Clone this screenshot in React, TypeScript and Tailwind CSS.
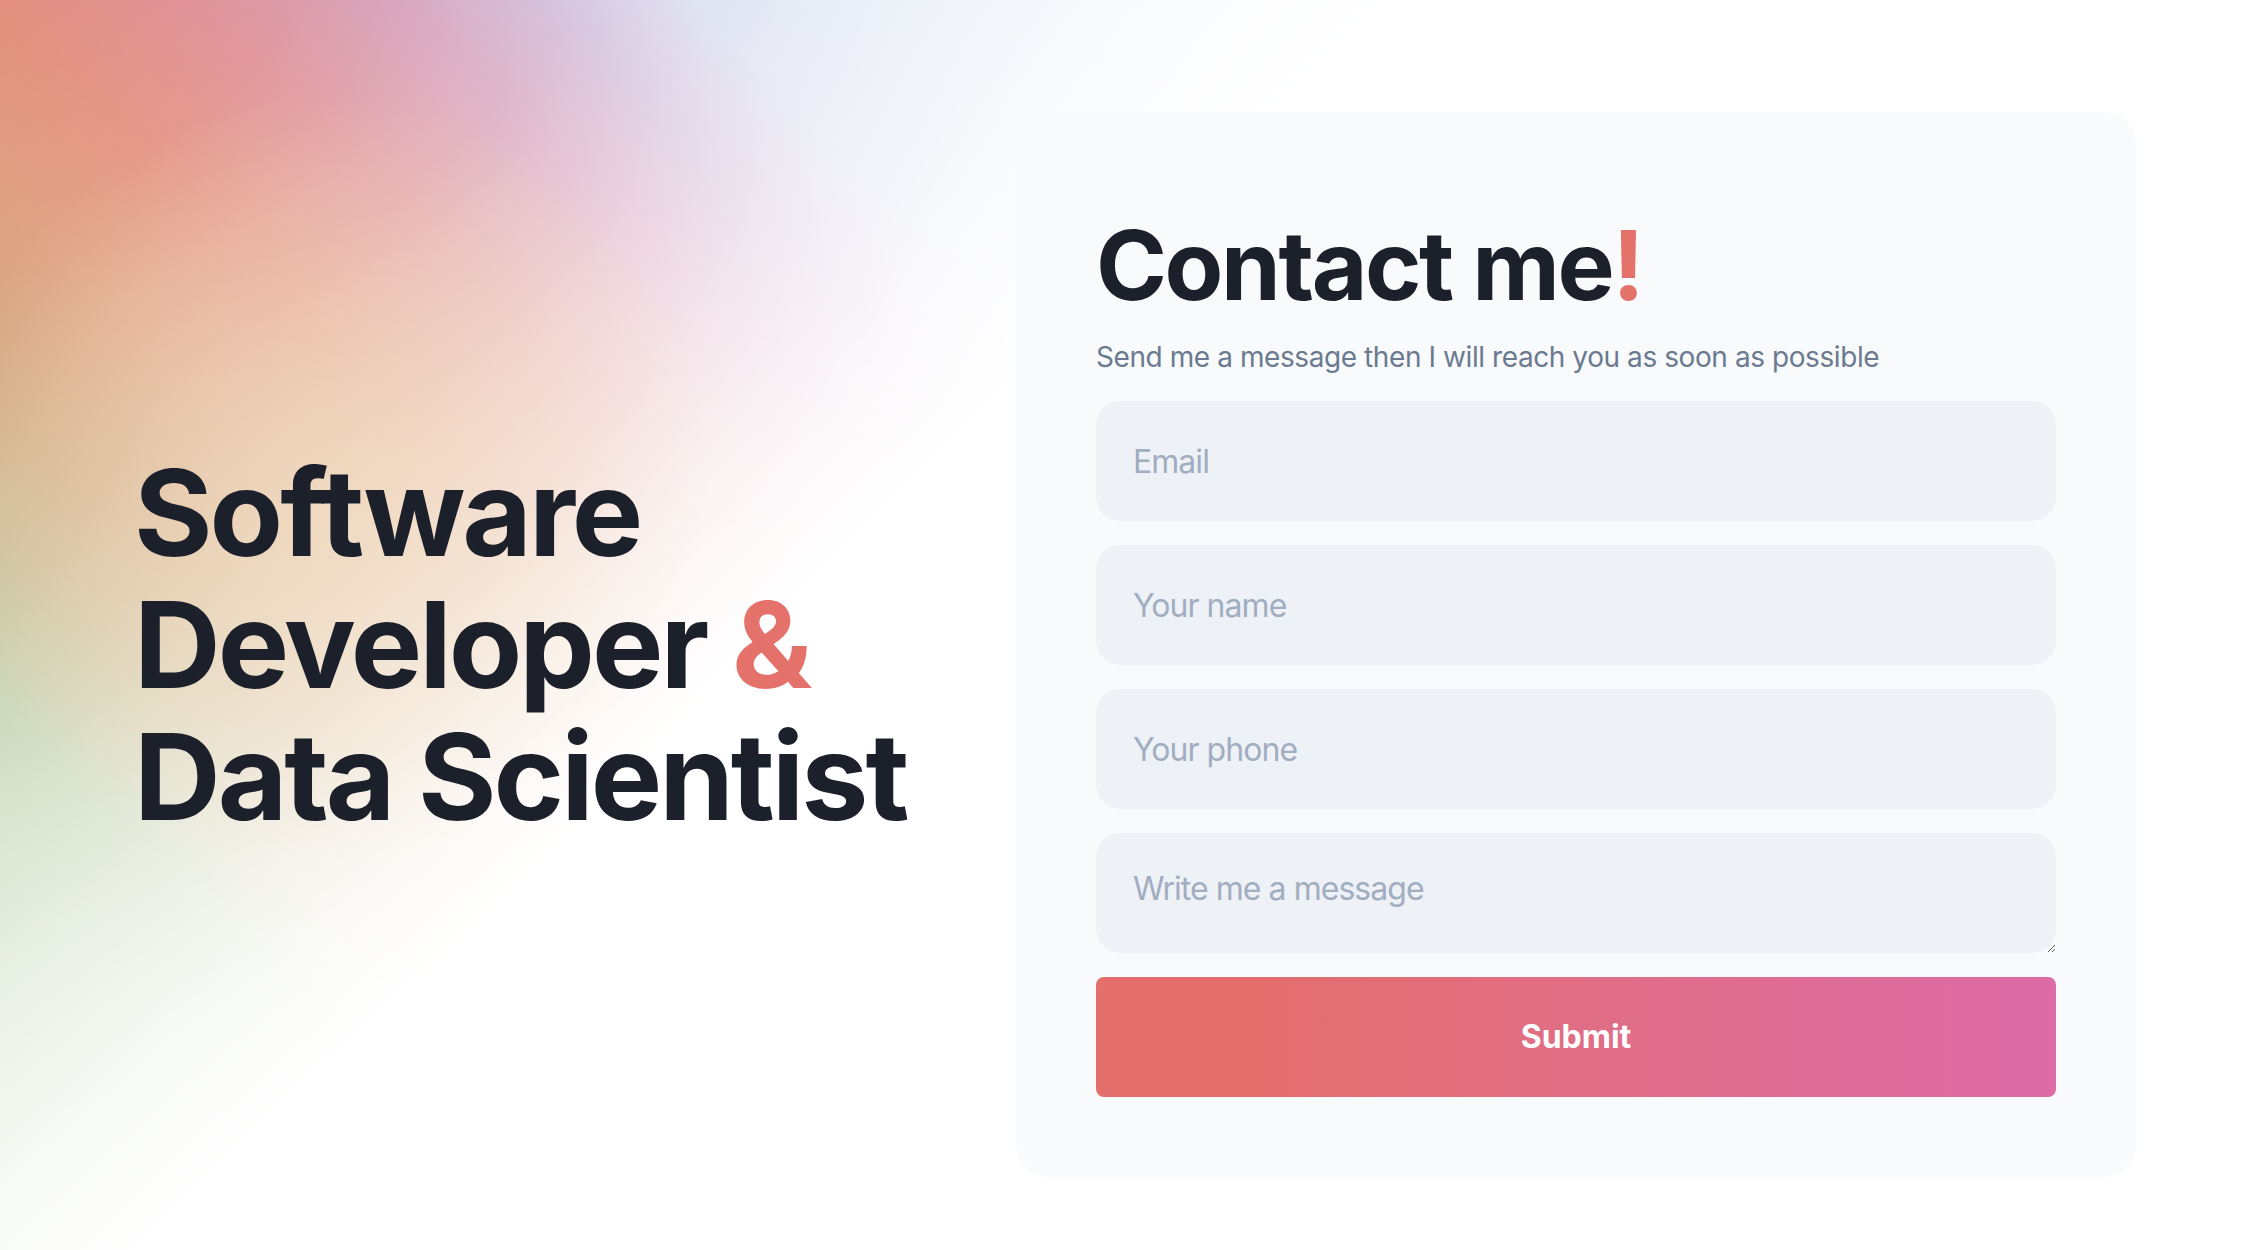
import React from 'react';

export default function App() {
  return (
    <div className="relative min-h-screen w-full overflow-hidden bg-white font-['Inter',sans-serif]">
      {/* Background glow */}
      <div className="pointer-events-none absolute left-0 top-0 h-[1500px] w-[1500px] bg-[linear-gradient(to_top_right,#b8cea6_0%,#b8cea6_10%,#aec69a_22%,#a8bf8e_26%,#beae7e_31.6%,#cda275_36.4%,#dd9b7b_43.6%,#e3907f_50%,#de8e94_56.4%,#d198b5_63.6%,#c7aed0_68.4%,#cbd0e9_73.2%,#d0dbee_80.4%,#d8e2f2_90%,#d8e2f2_100%)] [mask-image:linear-gradient(to_bottom_right,#000_0%,rgba(0,0,0,0.92)_10%,rgba(0,0,0,0.7)_20%,rgba(0,0,0,0.48)_26.7%,rgba(0,0,0,0.27)_33.3%,rgba(0,0,0,0.1)_40%,transparent_46.7%)] [-webkit-mask-image:linear-gradient(to_bottom_right,#000_0%,rgba(0,0,0,0.92)_10%,rgba(0,0,0,0.7)_20%,rgba(0,0,0,0.48)_26.7%,rgba(0,0,0,0.27)_33.3%,rgba(0,0,0,0.1)_40%,transparent_46.7%)]" />
      <div className="pointer-events-none absolute left-0 top-0 h-[1200px] w-[1200px] bg-[radial-gradient(circle_at_27%_40%,rgba(238,222,188,0.6)_0%,rgba(238,222,188,0.3)_18%,transparent_34%)]" />

      <div className="relative flex items-center pl-[134px] pr-[130px] pt-[112px] pb-[72px]">
        {/* Hero */}
        <div className="flex-1">
          <h1 className="text-[120px] font-bold leading-[132px] tracking-tight text-[#1c202b]">
            Software
            <br />
            Developer <span className="text-[#e5716b]">&amp;</span>
            <br />
            Data Scientist
          </h1>
        </div>

        {/* Contact card */}
        <div className="w-[1120px] rounded-[32px] bg-[#f8fafc] px-20 pt-[105px] pb-20">
          <h2 className="text-[96px] font-bold leading-none tracking-tight text-[#1c202b]">
            Contact me<span className="text-[#e5716b]">!</span>
          </h2>
          <p className="mt-6 text-[28px] leading-[40px] tracking-[-0.015em] text-[#6b7a90]">
            Send me a message then I will reach you as soon as possible
          </p>

          <form className="mt-6 flex flex-col gap-6" onSubmit={(e) => e.preventDefault()}>
            <input
              type="email"
              placeholder="Email"
              className="block h-[120px] w-full rounded-3xl bg-[#eef2f7] px-[37px] text-[32px] tracking-[-0.03em] text-[#1c202b] outline-none placeholder:text-[#a1adc0]"
            />
            <input
              type="text"
              placeholder="Your name"
              className="block h-[120px] w-full rounded-3xl bg-[#eef2f7] px-[37px] text-[32px] tracking-[-0.03em] text-[#1c202b] outline-none placeholder:text-[#a1adc0]"
            />
            <input
              type="tel"
              placeholder="Your phone"
              className="block h-[120px] w-full rounded-3xl bg-[#eef2f7] px-[37px] text-[32px] tracking-[-0.03em] text-[#1c202b] outline-none placeholder:text-[#a1adc0]"
            />
            <textarea
              placeholder="Write me a message"
              className="block h-[120px] w-full rounded-3xl bg-[#eef2f7] px-[37px] pt-8 text-[32px] leading-[48px] tracking-[-0.03em] text-[#1c202b] outline-none placeholder:text-[#a1adc0]"
            />
            <button
              type="submit"
              className="h-[120px] w-full rounded-lg bg-gradient-to-r from-[#e46e6b] from-15% to-[#dc6ba6] text-[32px] font-bold text-white"
            >
              Submit
            </button>
          </form>
        </div>
      </div>
    </div>
  );
}
